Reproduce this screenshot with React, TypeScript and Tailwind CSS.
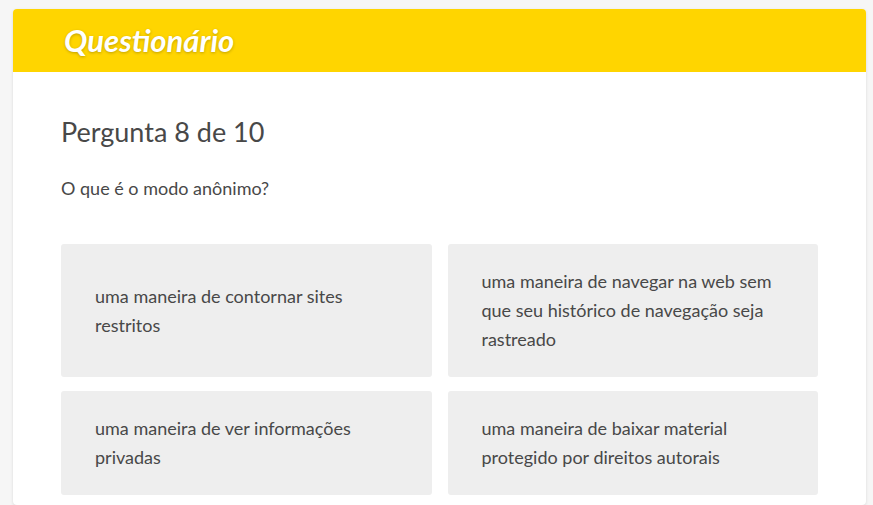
const options = [
  "uma maneira de contornar sites restritos",
  "uma maneira de navegar na web sem que seu histórico de navegação seja rastreado",
  "uma maneira de ver informações privadas",
  "uma maneira de baixar material protegido por direitos autorais",
];

export default function App() {
  return (
    <div className="min-h-[505px] bg-[#f6f6f6] pt-[9px] pl-[13px] pr-[7px] font-['Lato',sans-serif]">
      <div className="bg-white rounded-[4px] shadow-[0_1px_3px_rgba(0,0,0,0.12)] overflow-hidden">
        <div className="bg-[#ffd500] h-[63px] flex items-center pl-[51px]">
          <h1 className="text-white text-[31px] font-bold italic [text-shadow:0_1px_3px_rgba(0,0,0,0.25)]">
            Questionário
          </h1>
        </div>
        <div className="px-12 pt-[42px] pb-[10px] text-[#484848]">
          <h2 className="text-[27px] leading-[36px]">Pergunta 8 de 10</h2>
          <p className="mt-[26px] text-[18px] leading-[24px]">O que é o modo anônimo?</p>
          <div className="mt-[44px] grid grid-cols-2 gap-x-4 gap-y-[14px]">
            {options.map((o) => (
              <div
                key={o}
                className="bg-[#eeeeee] rounded-[3px] flex items-center px-[34px] py-[23px] text-[18px] leading-[29px] min-h-[104px]"
              >
                {o}
              </div>
            ))}
          </div>
        </div>
      </div>
    </div>
  );
}
